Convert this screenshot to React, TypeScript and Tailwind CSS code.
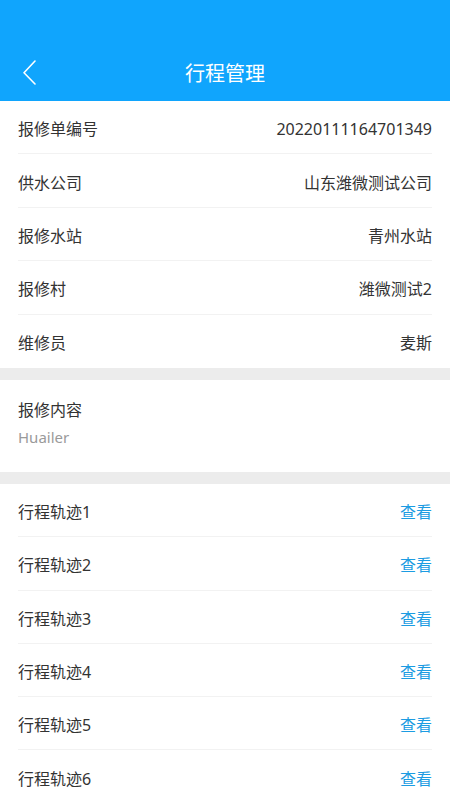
const infoRows = [
  { label: "报修单编号", value: "20220111164701349" },
  { label: "供水公司", value: "山东潍微测试公司" },
  { label: "报修水站", value: "青州水站" },
  { label: "报修村", value: "潍微测试2" },
  { label: "维修员", value: "麦斯" },
]

const tracks = [1, 2, 3, 4, 5, 6]

function BackIcon() {
  return (
    <svg className="absolute left-[20px] top-[10px]" width="18" height="26" viewBox="0 0 18 26" fill="none">
      <polyline
        points="15,1 4,12.7 15,24"
        stroke="white"
        strokeWidth="1.6"
        strokeLinecap="round"
        strokeLinejoin="round"
      />
    </svg>
  )
}

export default function App() {
  return (
    <div
      className="min-h-[800px] bg-[#ececec] text-[#333333]"
      style={{ fontFamily: '"Noto Sans", "Noto Sans CJK SC", sans-serif' }}
    >
      <header className="bg-[#10a5fd] pt-[50px]">
        <div className="relative flex h-[51px] items-center justify-center">
          <BackIcon />
          <h1 className="pb-[3px] text-[20px] text-white">行程管理</h1>
        </div>
      </header>

      <section className="bg-white px-[18px]">
        {infoRows.map((row, i) => (
          <div
            key={row.label}
            className={`flex h-[53.4px] items-center justify-between pt-[4px] text-[16px] ${
              i < infoRows.length - 1 ? "border-b border-[#f2f2f2]" : ""
            }`}
          >
            <span>{row.label}</span>
            <span>{row.value}</span>
          </div>
        ))}
      </section>

      <section className="mt-[12px] flex h-[92px] flex-col bg-white px-[18px] pt-[18px]">
        <span className="text-[16px] leading-[24px]">报修内容</span>
        <span className="mt-[4px] text-[15px] leading-[22px] text-[#9a9a9a]">Huailer</span>
      </section>

      <section className="mt-[12px] bg-white px-[18px]">
        {tracks.map((n) => (
          <div
            key={n}
            className="flex h-[53.3px] items-center justify-between border-b border-[#f2f2f2] pt-[4px] text-[16px]"
          >
            <span>行程轨迹{n}</span>
            <span className="text-[#1c9ce2]">查看</span>
          </div>
        ))}
      </section>
    </div>
  )
}
